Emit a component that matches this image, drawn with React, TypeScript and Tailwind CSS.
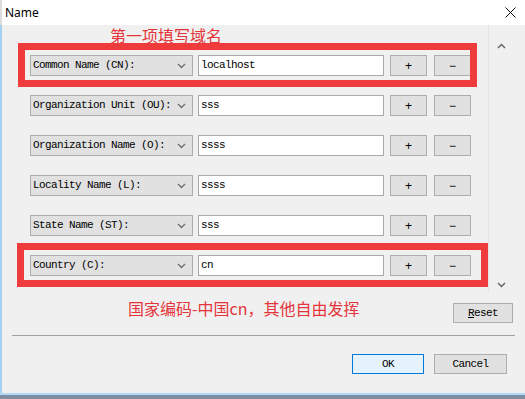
const FIELDS = [
  { label: "Common Name (CN):", value: "localhost" },
  { label: "Organization Unit (OU):", value: "sss" },
  { label: "Organization Name (O):", value: "ssss" },
  { label: "Locality Name (L):", value: "ssss" },
  { label: "State Name (ST):", value: "sss" },
  { label: "Country (C):", value: "cn" },
];

const mono = "font-['Liberation_Mono',monospace] text-[11px] tracking-[-0.6px] text-black";
const cjk = "font-['Noto_Sans_CJK_SC','Noto_Sans',sans-serif]";

const Chevron = ({ up = false, className = "" }: { up?: boolean; className?: string }) => (
  <svg width="9" height="6" viewBox="0 0 9 6" className={className}>
    <path
      d={up ? "M1 5 L4.5 1.5 L8 5" : "M1 1 L4.5 4.5 L8 1"}
      fill="none"
      stroke="currentColor"
      strokeWidth="1.4"
    />
  </svg>
);

const FieldRow = ({ label, value, box }: { label: string; value: string; box?: string }) => (
  <div className="relative flex h-[21px] w-[441px] items-stretch">
    {/* annotation box drawn over the row */}
    {box && <div className={`pointer-events-none absolute border-[7px] border-[#ef3b3b] ${box}`} />}
    <div className="flex w-[163px] items-center justify-between border border-[#adadad] bg-[#e1e1e1] pl-[2px] pr-[6px]">
      <span className={`${mono} whitespace-pre`}>{label}</span>
      <Chevron className="text-[#707070]" />
    </div>
    <div className="ml-[5px] flex w-[186px] items-center border border-[#a9a9a9] bg-white pl-[2px]">
      <span className={mono}>{value}</span>
    </div>
    <button className="ml-[6px] flex w-[37px] items-center justify-center border border-[#adadad] bg-[#e1e1e1] text-[12px] font-['Liberation_Sans',sans-serif] leading-none">
      +
    </button>
    <button className="ml-[7px] flex w-[37px] items-center justify-center border border-[#adadad] bg-[#e1e1e1] text-[12px] font-['Liberation_Sans',sans-serif] leading-none">
      −
    </button>
  </div>
);

export default function App() {
  return (
    <div className="flex h-[399px] w-[525px] flex-col overflow-hidden bg-[#f0f0f0]">
      {/* Title bar */}
      <div className="flex h-[25px] shrink-0 items-center justify-between border-l-2 border-[#dcdcdc] bg-white pl-[3px] pr-[9px]">
        <span className="font-['Noto_Sans','Liberation_Sans',sans-serif] text-[12px] text-black">Name</span>
        <svg width="11" height="11" viewBox="0 0 11 11">
          <path d="M0.5 0.5 L10.5 10.5 M10.5 0.5 L0.5 10.5" stroke="#111" strokeWidth="1" />
        </svg>
      </div>

      <div className="flex flex-1 flex-col border-l-2 border-[#a6d0ef]">
        {/* Scrolling area */}
        <div className="flex h-[267px] shrink-0">
          <div className="w-[486px] pl-[28px] pt-[1px]">
            <div className={`${cjk} ml-[80px] h-[18px] text-[16px] leading-[18px] text-[#e3353a]`}>第一项填写域名</div>
            <div className="mt-[11px] flex flex-col gap-[19px]">
              {FIELDS.map((f, i) => (
                <FieldRow
                  key={f.label}
                  label={f.label}
                  value={f.value}
                  box={
                    i === 0
                      ? "-left-[12px] -top-[12px] -right-[6px] -bottom-[11px]"
                      : i === 5
                      ? "-left-[13px] -top-[12px] -right-[17px] -bottom-[11px]"
                      : undefined
                  }
                />
              ))}
            </div>
          </div>
          <div className="flex w-[37px] flex-col items-start justify-between border-l border-[#e4e4e4] pb-[4px] pl-[8px] pt-[18px] text-[#606060]">
            <Chevron up />
            <Chevron />
          </div>
        </div>

        {/* Note + reset */}
        <div className="flex h-[43px] shrink-0 items-start">
          <div className={`${cjk} ml-[126px] mt-[6px] text-[16px] leading-[20px] text-[#e3353a]`}>
            国家编码-中国cn，其他自由发挥
          </div>
          <button className={`${mono} ml-auto mr-[12px] mt-[11px] h-[20px] w-[60px] border border-[#adadad] bg-[#e1e1e1]`}>
            <span className="underline">R</span>eset
          </button>
        </div>

        {/* Separator */}
        <div className="mx-[10px] h-[2px] shrink-0 border-t border-[#a0a0a0] border-b-white" />

        {/* Dialog buttons */}
        <div className="mt-[17px] flex justify-end gap-[10px] pr-[18px]">
          <button className={`${mono} h-[20px] w-[72px] border border-[#0078d7] bg-[#e5f1fb]`}>OK</button>
          <button className={`${mono} h-[20px] w-[73px] border border-[#adadad] bg-[#e1e1e1]`}>Cancel</button>
        </div>
      </div>

      {/* Window bottom edge */}
      <div className="h-[6px] shrink-0 border-t-2 border-[#b3d9f3] bg-[#7e8fa3]" />
    </div>
  );
}
